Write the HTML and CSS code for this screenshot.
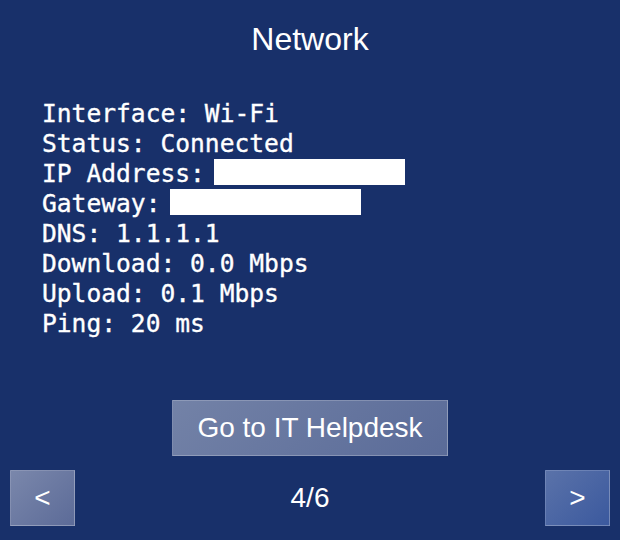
FILE: index.html
```html
<!DOCTYPE html>
<html>
<head>
<meta charset="utf-8">
<link rel="stylesheet" href="styles.css">
</head>
<body>
<div class="screen">
  <h1 class="title">Network</h1>
  <div class="info">
    <div class="line">Interface: Wi-Fi</div>
    <div class="line">Status: Connected</div>
    <div class="line">IP Address: <span class="redact"></span></div>
    <div class="line">Gateway: <span class="redact"></span></div>
    <div class="line">DNS: 1.1.1.1</div>
    <div class="line">Download: 0.0 Mbps</div>
    <div class="line">Upload: 0.1 Mbps</div>
    <div class="line">Ping: 20 ms</div>
  </div>
  <div class="action">
    <button class="helpdesk">Go to IT Helpdesk</button>
  </div>
  <div class="nav">
    <button class="navbtn prev">&lt;</button>
    <span class="page">4/6</span>
    <button class="navbtn next">&gt;</button>
  </div>
</div>
</body>
</html>
```
FILE: styles.css
```css
html, body {
  margin: 0;
  padding: 0;
  background: #18306a;
}
.screen {
  width: 620px;
  height: 540px;
  display: flex;
  flex-direction: column;
  color: #ffffff;
  font-family: "Liberation Sans", Arial, sans-serif;
}
.title {
  margin: 19px 0 0 0;
  height: 40px;
  line-height: 40px;
  font-size: 32px;
  font-weight: normal;
  text-align: center;
}
.info {
  margin-top: 40px;
  padding-left: 42px;
  font-family: "DejaVu Sans Mono", monospace;
  font-size: 24.6px;
  line-height: 30px;
  -webkit-text-stroke: 0.35px #ffffff;
}
.line {
  height: 30px;
  white-space: pre;
}
.redact {
  display: inline-block;
  width: 191px;
  height: 26px;
  margin-left: -5.5px;
  background: #ffffff;
  vertical-align: -3px;
}
.action {
  margin-top: 61px;
  display: flex;
  justify-content: center;
}
.helpdesk {
  width: 276px;
  height: 56px;
  margin: 0;
  padding: 0;
  border: 1px solid rgba(255, 255, 255, 0.22);
  background: linear-gradient(135deg, #7382a7 0%, #5a6b98 100%);
  color: #ffffff;
  font-family: "Liberation Sans", Arial, sans-serif;
  font-size: 28px;
}
.nav {
  margin-top: 14px;
  padding: 0 10px;
  display: flex;
  justify-content: space-between;
  align-items: center;
}
.navbtn {
  width: 65px;
  height: 56px;
  margin: 0;
  padding: 0;
  border: 1px solid rgba(255, 255, 255, 0.22);
  color: #ffffff;
  font-family: "Liberation Sans", Arial, sans-serif;
  font-size: 28px;
}
.prev {
  background: linear-gradient(135deg, #7a87ab 0%, #5c6b98 100%);
}
.next {
  background: linear-gradient(135deg, #5a72a9 0%, #3b599e 100%);
}
.page {
  font-size: 28px;
  line-height: 56px;
}
```
